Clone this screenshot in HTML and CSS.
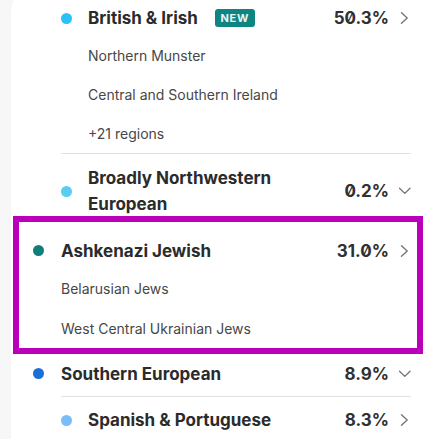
FILE: index.html
```html
<!DOCTYPE html>
<html lang="en">
<head>
<meta charset="utf-8">
<title>Ethnicity estimate</title>
<link rel="stylesheet" href="styles.css">
</head>
<body>
<div class="page">
  <div class="card">
    <div class="list">
      <div class="child">
        <div class="row head first">
          <span class="dot c-british"></span>
          <span class="name">British &amp; Irish<span class="badge">NEW</span></span>
          <span class="pct">50.3%</span>
          <svg class="chev" viewBox="0 0 12 12" width="12" height="12"><path d="M2.5 0.8 L8.2 6 L2.5 11.2" /></svg>
        </div>
        <div class="sub">Northern Munster</div>
        <div class="sub">Central and Southern Ireland</div>
        <div class="sub">+21 regions</div>
      </div>
      <div class="child divided">
        <div class="row head two">
          <span class="dot c-broad"></span>
          <span class="name">Broadly Northwestern<br>European</span>
          <span class="pct">0.2%</span>
          <svg class="chev" viewBox="0 0 12 12" width="12" height="12"><path d="M0.5 3.2 L5.8 8.4 L11 3.2" /></svg>
        </div>
      </div>
      <div class="highlight">
        <div class="row head">
          <span class="dot c-ashk"></span>
          <span class="name">Ashkenazi Jewish</span>
          <span class="pct">31.0%</span>
          <svg class="chev" viewBox="0 0 12 12" width="12" height="12"><path d="M2.5 0.8 L8.2 6 L2.5 11.2" /></svg>
        </div>
        <div class="sub top">Belarusian Jews</div>
        <div class="sub top">West Central Ukrainian Jews</div>
      </div>
      <div class="row head southern">
        <span class="dot c-south"></span>
        <span class="name">Southern European</span>
        <span class="pct">8.9%</span>
        <svg class="chev" viewBox="0 0 12 12" width="12" height="12"><path d="M0.5 3.2 L5.8 8.4 L11 3.2" /></svg>
      </div>
      <div class="child divided">
        <div class="row head spanish">
          <span class="dot c-spain"></span>
          <span class="name">Spanish &amp; Portuguese</span>
          <span class="pct">8.3%</span>
          <svg class="chev" viewBox="0 0 12 12" width="12" height="12"><path d="M2.5 0.8 L8.2 6 L2.5 11.2" /></svg>
        </div>
      </div>
    </div>
  </div>
</div>
</body>
</html>
```
FILE: styles.css
```css
* { box-sizing: border-box; }
html, body { margin: 0; padding: 0; }
body {
  width: 432px;
  height: 439px;
  overflow: hidden;
  background: linear-gradient(to right, #f7f7f8 0%, #eeeff0 60%, #e6e7ea 100%);
  font-family: "Inter", "Liberation Sans", sans-serif;
  color: #2b2b2b;
}
.page {
  display: flex;
  padding-left: 11px;
  margin-top: -12px;
}
.card {
  flex: 1;
  background: #ffffff;
  border-top-left-radius: 24px;
  padding: 12px 0 0 22px;
  min-height: 460px;
}
.list {
  width: 378px;
  display: flex;
  flex-direction: column;
}
.row {
  display: grid;
  grid-template-columns: 28px 1fr auto 22px;
  align-items: center;
}
.head {
  height: 35px;
  font-weight: 700;
  font-size: 17px;
  line-height: 24px;
}
.head.first {
  height: 36px;
}
.name {
  display: flex;
  align-items: center;
}
.pct {
  font-feature-settings: "zero" 1;
  font-size: 17px;
  font-weight: 700;
  color: #303030;
}
.chev {
  margin-left: 10px;
  fill: none;
  stroke: #727272;
  stroke-width: 1.3;
  stroke-linecap: round;
  stroke-linejoin: round;
}
.dot {
  width: 11px;
  height: 11px;
  border-radius: 50%;
}
.c-british { background: #27c3f6; }
.c-broad { background: #58cdf1; }
.c-ashk { background: #107f7c; }
.c-south { background: #1a70d6; }
.c-spain { background: #79bdfb; }

.badge {
  display: inline-flex;
  align-items: center;
  justify-content: center;
  margin-left: 17px;
  width: 40px;
  height: 18px;
  border-radius: 3px;
  background: #0f8581;
  color: #e9f6f5;
  font-size: 11px;
  font-weight: 700;
  letter-spacing: 0.8px;
  line-height: 1;
}
.child {
  margin-left: 28px;
}
.child .row {
  grid-template-columns: 27px 1fr auto 22px;
}
.divided {
  border-top: 1px solid #e1e1e1;
}
.sub {
  height: 39px;
  display: flex;
  align-items: center;
  padding-left: 27px;
  font-size: 14px;
  color: #474747;
}
.sub.top {
  height: 40px;
  padding-left: 28px;
}
.head.two {
  height: auto;
  padding-top: 11px;
  line-height: 26px;
  margin-bottom: -1px;
}
.highlight {
  border: 6px solid #ba00bb;
  margin-left: -20px;
  margin-right: -12px;
  padding: 11px 6px 0 14px;
}
.southern {
  height: 42px;
  padding-bottom: 3px;
}
.spanish {
  height: 46px;
}
```
